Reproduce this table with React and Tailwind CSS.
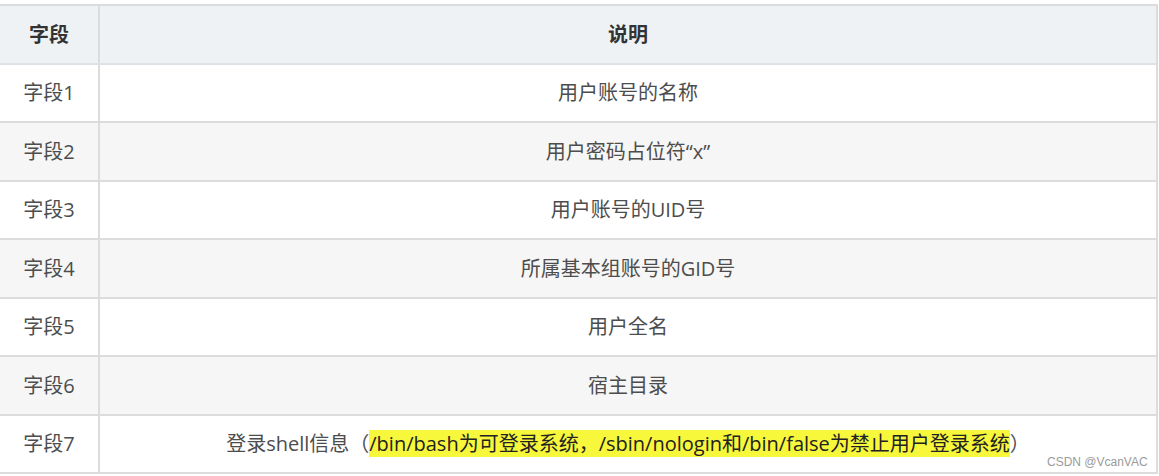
const rows = [
  { name: '字段1', desc: '用户账号的名称' },
  { name: '字段2', desc: '用户密码占位符“x”' },
  { name: '字段3', desc: '用户账号的UID号' },
  { name: '字段4', desc: '所属基本组账号的GID号' },
  { name: '字段5', desc: '用户全名' },
  { name: '字段6', desc: '宿主目录' },
];

export default function App() {
  return (
    <div className="relative w-[1159px] h-[476px] bg-white pt-[4px] font-['Open_Sans','Noto_Sans_CJK_SC',sans-serif] text-[20px] text-[#4d4d4d]">
      <div className="w-[1158px] border-t-2 border-r-2 border-b-2 border-[#dcdcdc]">
        {/* header */}
        <div className="flex h-[59px] bg-[#eef2f5] border-b-2 border-[#dde2e7] font-bold text-[#333]">
          <div className="w-[100px] flex items-center justify-center border-r-2 border-[#dcdcdc]">字段</div>
          <div className="flex-1 flex items-center justify-center">说明</div>
        </div>

        {rows.map((row, i) => (
          <div
            key={row.name}
            className={`flex border-b-2 border-[#dcdcdc] ${i % 2 === 0 ? 'h-[58px] bg-white' : 'h-[59px] bg-[#f6f6f6]'}`}
          >
            <div className="w-[100px] flex items-center justify-center border-r-2 border-[#dcdcdc]">{row.name}</div>
            <div className="flex-1 flex items-center justify-center">{row.desc}</div>
          </div>
        ))}

        <div className="flex h-[56px] bg-white">
          <div className="w-[100px] flex items-center justify-center border-r-2 border-[#dcdcdc]">字段7</div>
          <div className="flex-1 flex items-center justify-center">
            <span>
              登录shell信息（
              <span className="bg-[#f7f73c] text-[#222]">/bin/bash为可登录系统，/sbin/nologin和/bin/false为禁止用户登录系统</span>）
            </span>
          </div>
        </div>
      </div>

      {/* watermark */}
      <div className="absolute left-[1047px] top-[453px] text-[12px] text-[#9a9a9a] font-['Liberation_Sans',sans-serif]">
        CSDN @VcanVAC
      </div>
    </div>
  );
}
